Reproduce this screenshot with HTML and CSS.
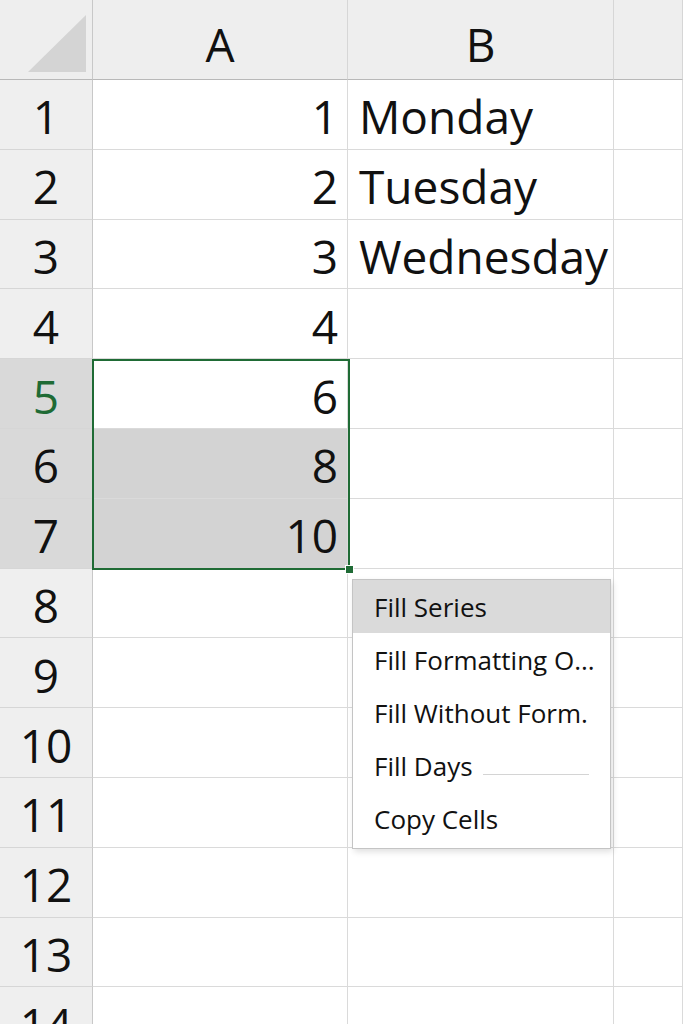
FILE: index.html
```html
<!DOCTYPE html>
<html lang="en">
<head>
    <meta charset="UTF-8">
    <meta name="viewport" content="width=device-width, initial-scale=1.0">
    <title>Fill Series</title>
    <link rel="stylesheet" href="styles.css">
</head>
<body>
    <div class="sheet">
        <!-- column headers -->
        <div class="corner">
            <svg width="93" height="80" viewBox="0 0 93 80">
                <polygon points="28,72 86,72 86,15" fill="#d4d4d4" />
            </svg>
        </div>
        <div class="col-head">A</div>
        <div class="col-head">B</div>
        <div class="col-head"></div>

        <div class="row-head">1</div>
        <div class="cell num">1</div>
        <div class="cell text">Monday</div>
        <div class="cell"></div>

        <div class="row-head">2</div>
        <div class="cell num">2</div>
        <div class="cell text">Tuesday</div>
        <div class="cell"></div>

        <div class="row-head">3</div>
        <div class="cell num">3</div>
        <div class="cell text">Wednesday</div>
        <div class="cell"></div>

        <div class="row-head">4</div>
        <div class="cell num">4</div>
        <div class="cell"></div>
        <div class="cell"></div>

        <div class="row-head active current">5</div>
        <div class="cell num">6</div>
        <div class="cell"></div>
        <div class="cell"></div>

        <div class="row-head active">6</div>
        <div class="cell num picked">8</div>
        <div class="cell"></div>
        <div class="cell"></div>

        <div class="row-head active">7</div>
        <div class="cell num picked">10</div>
        <div class="cell"></div>
        <div class="cell"></div>

        <div class="row-head">8</div>
        <div class="cell"></div>
        <div class="cell"></div>
        <div class="cell"></div>

        <div class="row-head">9</div>
        <div class="cell"></div>
        <div class="cell"></div>
        <div class="cell"></div>

        <div class="row-head">10</div>
        <div class="cell"></div>
        <div class="cell"></div>
        <div class="cell"></div>

        <div class="row-head">11</div>
        <div class="cell"></div>
        <div class="cell"></div>
        <div class="cell"></div>

        <div class="row-head">12</div>
        <div class="cell"></div>
        <div class="cell"></div>
        <div class="cell"></div>

        <div class="row-head">13</div>
        <div class="cell"></div>
        <div class="cell"></div>
        <div class="cell"></div>

        <div class="row-head">14</div>
        <div class="cell"></div>
        <div class="cell"></div>
        <div class="cell"></div>

        <!-- selection A5:A7 -->
        <div class="selection">
            <span class="handle"></span>
        </div>

        <!-- auto fill options -->
        <ul class="menu">
            <li class="menu-item hover">Fill Series</li>
            <li class="menu-item">Fill Formatting O...</li>
            <li class="menu-item">Fill Without Form.</li>
            <li class="menu-item">Fill Days <span class="menu-rule"></span></li>
            <li class="menu-item">Copy Cells</li>
        </ul>
    </div>
</body>
</html>
```

FILE: styles.css
```css
body {
    margin: 0;
    background-color: #fff;
    font-family: "Open Sans", "Noto Sans", sans-serif;
    color: #111;
    overflow: hidden;
}
.sheet {
    position: relative;
    display: grid;
    grid-template-columns: 93px 255px 266px 1fr;
    grid-template-rows: 80px repeat(14, 69.8px);
    width: 683px;
    height: 1024px;
    overflow: hidden;
}
.corner {
    background-color: #eeeeee;
    border-right: 1px solid #c8c8c8;
    border-bottom: 1px solid #b8b8b8;
    box-sizing: border-box;
}
.corner svg {
    display: block;
}
.col-head {
    display: flex;
    align-items: center;
    justify-content: center;
    background-color: #eeeeee;
    border-right: 1px solid #d6d6d6;
    border-bottom: 1px solid #b8b8b8;
    box-sizing: border-box;
    font-size: 46px;
    padding-top: 8px;
}
.row-head {
    display: flex;
    align-items: center;
    justify-content: center;
    background-color: #efefef;
    border-right: 1px solid #c8c8c8;
    border-bottom: 1px solid #d6d6d6;
    box-sizing: border-box;
    font-size: 46px;
    padding-top: 4px;
}
.row-head.active {
    background-color: #d9d9d9;
}
.row-head.current {
    color: #1f6b35;
}
.cell {
    display: flex;
    align-items: center;
    border-right: 1px solid #dadada;
    border-bottom: 1px solid #dadada;
    box-sizing: border-box;
    font-size: 46px;
    padding-top: 4px;
    white-space: nowrap;
}
.cell.num {
    justify-content: flex-end;
    padding-right: 9px;
}
.cell.text {
    padding-left: 11px;
    overflow: visible;
}
.cell.picked {
    background-color: #d3d3d3;
}
.selection {
    position: absolute;
    left: 92px;
    top: 359px;
    width: 258px;
    height: 211px;
    border: 2px solid #1f6b35;
    box-sizing: border-box;
    pointer-events: none;
}
.handle {
    position: absolute;
    right: -6px;
    bottom: -6px;
    width: 7px;
    height: 7px;
    background-color: #1f6b35;
    border: 1px solid #fff;
}
.menu {
    position: absolute;
    left: 352px;
    top: 579px;
    width: 259px;
    margin: 0;
    padding: 0 0 2px;
    list-style: none;
    background-color: #fff;
    border: 1px solid #c4c4c4;
    box-sizing: border-box;
    box-shadow: 2px 3px 6px rgba(0, 0, 0, 0.12);
}
.menu-item {
    display: flex;
    align-items: center;
    height: 53.2px;
    padding-left: 21px;
    font-size: 26px;
    white-space: nowrap;
}
.menu-item.hover {
    background-color: #dadada;
}
.menu-rule {
    width: 106px;
    margin-left: 10px;
    margin-top: 16px;
    border-bottom: 1px solid #d4d4d4;
}
```
